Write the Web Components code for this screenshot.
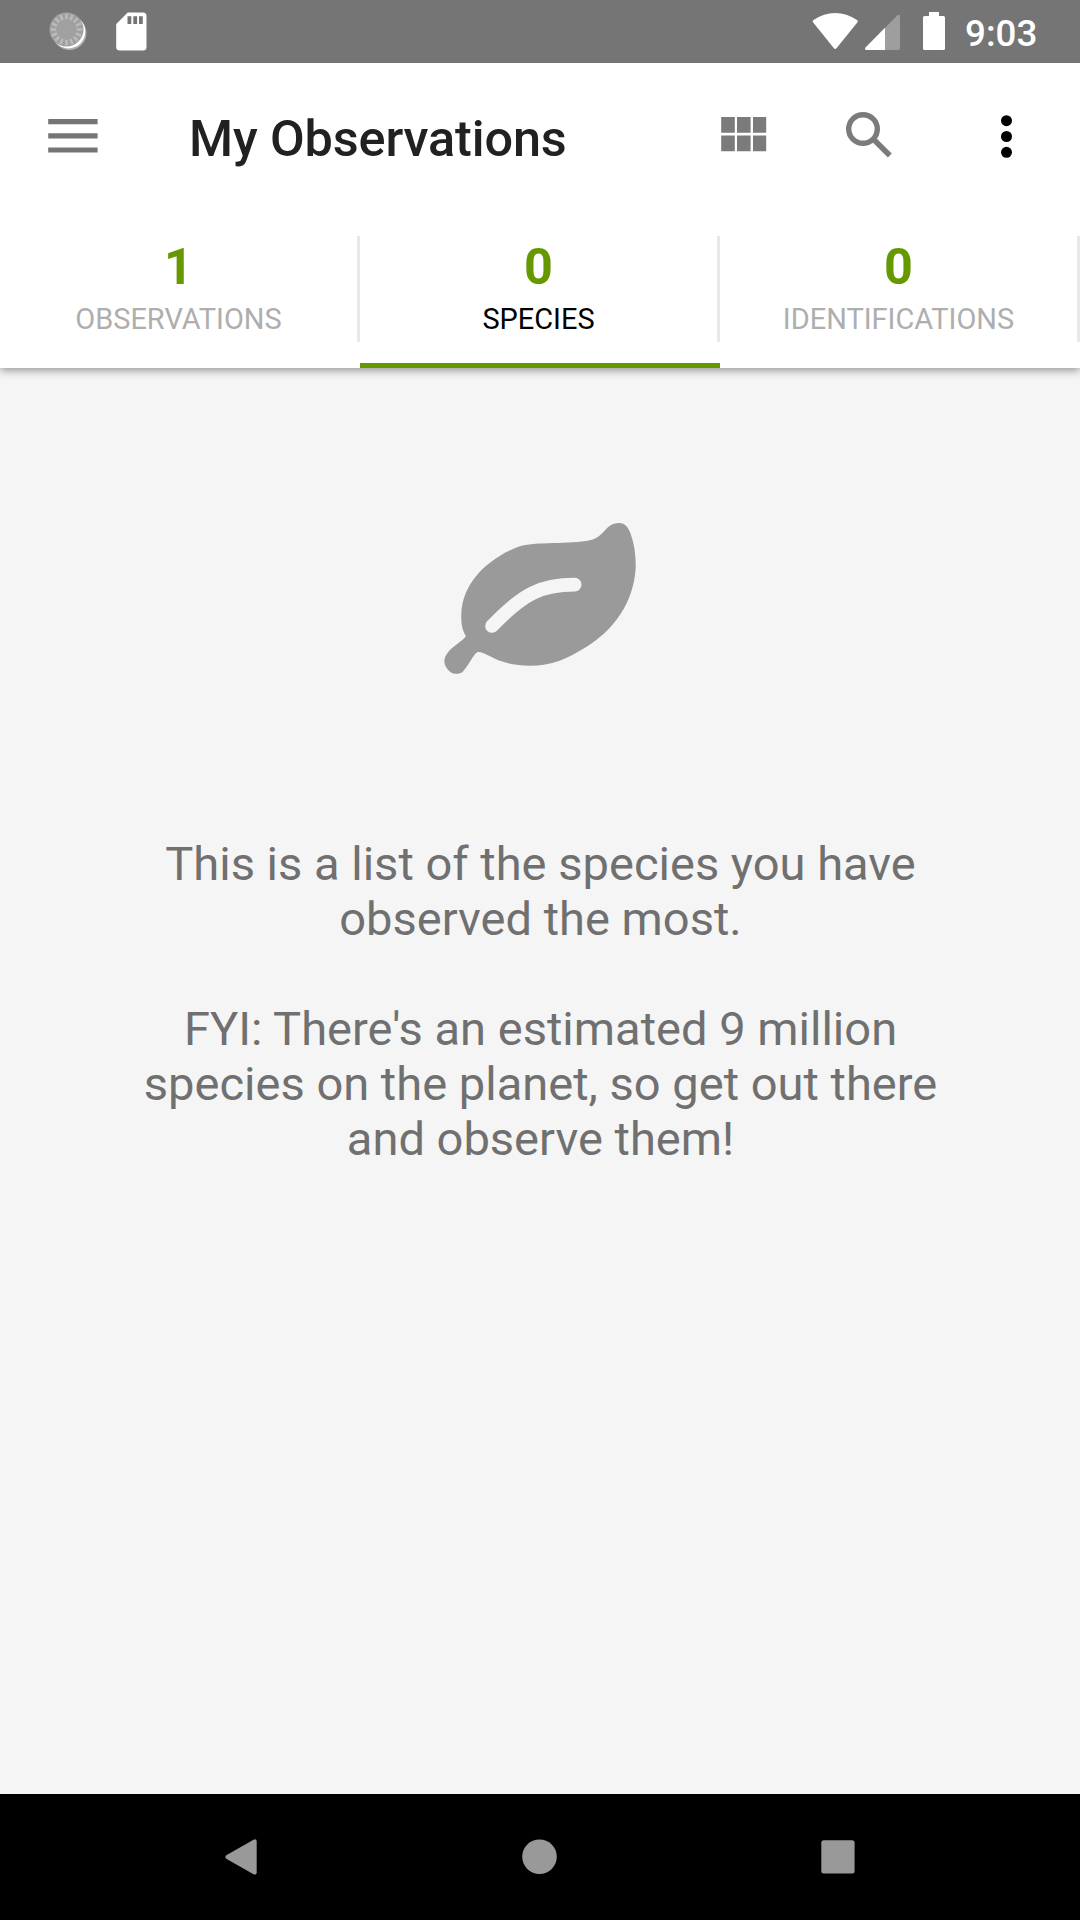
<!DOCTYPE html>
<html lang="en">
<head>
<meta charset="utf-8">
<title>My Observations</title>
<style>
html,body{margin:0;height:100%;background:#f5f5f5}
body{font-family:Roboto,"Noto Sans",sans-serif}
</style>
</head>
<body>
<observations-app></observations-app>
<script>
const define = (name, html) => customElements.define(name, class extends HTMLElement {
  constructor() {
    super();
    const t = document.createElement('template');
    t.innerHTML = html;
    this.attachShadow({mode: 'open'}).append(t.content.cloneNode(true));
  }
});

let ticks = '';
for (let i = 0; i < 16; i++) ticks += `<path d="M66.5 13.7v5.5" transform="rotate(${i * 22.5} 66.5 29.500)"/>`;

define('status-bar', `
<style>
:host{display:flex;height:63px;background:#757575;color:#fff;justify-content:space-between}
svg{display:block}
.right{display:flex}
.time{font-size:36.75px;font-weight:500;line-height:43px;padding-top:12px;width:115px;white-space:nowrap}
</style>
<svg width="160" height="63" viewBox="0 0 160 63">
  <circle cx="69.500" cy="33" r="17" fill="#b0b0b0"/>
  <circle cx="68.500" cy="31.600" r="16.800" fill="#fff"/>
  <circle cx="66.500" cy="29.500" r="17" fill="#a0a0a0"/>
  <g stroke="#bcbcbc" stroke-width="2.400">${ticks}</g>
  <path fill="#fff" fill-rule="evenodd" d="M127.7 12.5H143q3.5 0 3.5 3.5v31q0 3.5-3.5 3.5h-23.300q-3.500 0-3.500-3.500V24zM127.500 16.300v7.700h3.800v-7.700zM133.300 16.300v7.700h3.800v-7.700zM139 16.300v7.700h3.800v-7.700z"/>
</svg>
<div class="right">
<svg width="165" height="63" viewBox="800 0 165 63" fill="#fff">
  <path d="M813 22.300Q812 21 813.500 20C827 10.500 843.500 10.500 857 20Q858.400 21 857.500 22.300L836.500 48.300Q835.200 49.600 833.900 48.300z"/>
  <path d="M865.600 47.500L897.300 15.400Q900 13.700 900 16.500V48Q900 50 898 50H867Q864 50 865.600 47.500z" opacity=".3"/>
  <path d="M865.600 47.500L885 27.800V50H867Q864 50 865.600 47.500z"/>
  <path d="M929 12h10v4h4.500q1.500 0 1.500 1.500v31q0 1.500-1.500 1.500h-19q-1.500 0-1.500-1.500v-31q0-1.500 1.500-1.500h4.500z"/>
</svg>
<div class="time">9:03</div>
</div>`);

define('tool-bar', `
<style>
:host{display:flex;height:147px;align-items:center;background:#fff}
svg{display:block}
.title{width:510px;font-size:50.400px;letter-spacing:-.12px;font-weight:500;line-height:60px;color:#212121;white-space:nowrap;padding-top:4px}
</style>
<svg width="189" height="147" viewBox="0 63 189 147" fill="#757575">
  <path d="M48.200 119.100h49.400v5.200H48.200zM48.200 133.200h49.400v5.200H48.200zM48.200 147.400h49.400v5.200H48.200z"/>
</svg>
<div class="title"><slot></slot></div>
<svg width="381" height="147" viewBox="699 63 381 147">
  <path fill="#7b7b7b" d="M721.200 117h13.600v15.700h-13.600zM737 117h13.600v15.700H737zM753 117h13.200v15.700H753zM721.200 135.500h13.600v15.700h-13.600zM737 135.500h13.600v15.700H737zM753 135.500h13.200v15.700H753z"/>
  <circle cx="863" cy="129" r="14.300" fill="none" stroke="#7b7b7b" stroke-width="5.400"/>
  <path fill="none" stroke="#7b7b7b" stroke-width="5.500" d="M874.500 140.300L889.800 155.500"/>
  <g fill="#000"><circle cx="1006.500" cy="120.700" r="5.500"/><circle cx="1006.500" cy="136.500" r="5.500"/><circle cx="1006.500" cy="152.300" r="5.500"/></g>
</svg>`);

define('stat-tab', `
<style>
:host{display:flex;flex-direction:column;flex:1;height:158px;box-sizing:border-box;color:#aeaeae}
.cell{display:flex;margin-top:26px;height:106px;border-right:3px solid #e8e8e8;flex-direction:column;align-items:center;padding-top:1px;box-sizing:border-box}
.count{font-size:50.400px;font-weight:700;line-height:60px;color:#690;height:60px}
.label{font-size:28.950px;line-height:34px;margin-top:5px;white-space:nowrap}
.mark{height:5px;margin-top:21px}
:host([selected]){color:#000}
:host([selected]) .mark{background:#690}
</style>
<div class="cell"><div class="count"><slot name="count"></slot></div><div class="label"><slot></slot></div></div>
<div class="mark"></div>`);

define('tab-strip', `
<style>:host{display:flex;background:#fff}</style><slot></slot>`);

define('empty-state', `
<style>
:host{display:flex;flex-direction:column;align-items:center;flex:1;background:#f5f5f5;padding-top:132px;color:#707070}
svg{display:block;margin-bottom:136px}
::slotted(p){margin:0 0 55px;padding-left:1px;font-size:47.050px;line-height:55px;text-align:center;white-space:nowrap}
</style>
<svg width="240" height="200" viewBox="0 0 720 600">
  <path fill="#9a9a9a" d="M137 407C126 388 123 370 124 340C128 250 200 178 295 140C345 124 450 134 510 121C558 108 552 72 597 69C612 69 622 77 631 99C643 131 648 165 647 205C641 308 580 392 500 440C440 477 395 497 330 497C285 496 250 489 222 475C200 464 182 453 172 457C160 462 147 497 128 515C120 523 101 524 91 516C80 507 72 494 73 480C77 450 118 430 134 413Q138 410 137 407z"/>
  <path fill="none" stroke="#f5f5f5" stroke-width="41" stroke-linecap="round" d="M216 378C310 280 364 254 464 254"/>
</svg>
<slot></slot>`);

define('nav-bar', `
<style>:host{display:flex;height:126px;background:#000;justify-content:center}svg{display:block}</style>
<svg width="1080" height="126" viewBox="0 1794 1080 126" fill="#999">
  <path d="M226.300 1855.300L253.500 1839.700Q256.700 1838.500 256.700 1841.500V1872.500Q256.700 1875.500 253.500 1874.300L226.300 1858.700Q224.300 1857 226.300 1855.300z"/>
  <circle cx="539.500" cy="1856.700" r="17.300"/>
  <rect x="821.300" y="1840.300" width="33.300" height="33.300" rx="2.500"/>
</svg>`);

define('observations-app', `
<style>
:host{display:flex;flex-direction:column;width:1080px;height:1920px;overflow:hidden}
header{position:relative;z-index:1;box-shadow:0 3px 8px rgba(0,0,0,.36);clip-path:inset(0 0 -20px 0)}
</style>
<status-bar></status-bar>
<header>
<tool-bar>My Observations</tool-bar>
<tab-strip>
<stat-tab><span slot="count">1</span>OBSERVATIONS</stat-tab>
<stat-tab selected><span slot="count">0</span>SPECIES</stat-tab>
<stat-tab><span slot="count">0</span>IDENTIFICATIONS</stat-tab>
</tab-strip>
</header>
<empty-state>
<p>This is a list of the species you have<br>observed the most.</p>
<p>FYI: There's an estimated 9 million<br>species on the planet, so get out there<br>and observe them!</p>
</empty-state>
<nav-bar></nav-bar>`);
</script>
</body>
</html>
